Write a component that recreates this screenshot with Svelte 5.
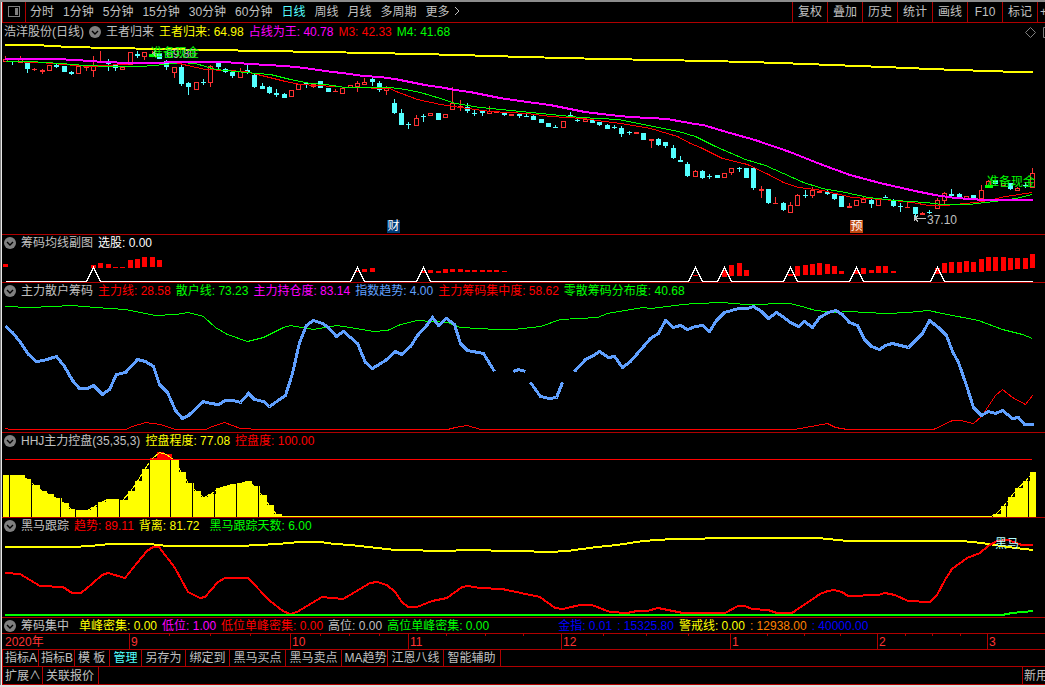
<script lang="ts">
  type Tone = 'plain' | 'white' | 'yellow' | 'magenta' | 'red' | 'green' | 'sky' | 'blue' | 'orange';
  type Legend = { text: string; tone: Tone; lead?: 'sm' | 'lg' };
  type Series = { tone: string; points: string; width?: number };
  // u = up, d = down; then body top, body bottom, high, low
  type Candle = [string, number, number, number?, number?];

  // every chart shares this horizontal space
  const LEFT = 2;
  const WIDTH = 1043;
  const FIRST_BAR = 5;
  const LAST_BAR = 1032;
  const BARS = 141;

  const barX = (i: number) => Math.round(FIRST_BAR + (i * (LAST_BAR - FIRST_BAR)) / (BARS - 1));
  const pct = (x: number) => ((x - LEFT) / WIDTH) * 100;

  const periods = ['分时', '1分钟', '5分钟', '15分钟', '30分钟', '60分钟', '日线', '周线', '月线', '多周期', '更多'];
  let period = $state('日线');

  const tools = ['复权', '叠加', '历史', '统计', '画线', 'F10', '标记'];
  const tabs = ['指标A', '指标B', '模 板', '管理', '另存为', '绑定到', '黑马买点', '黑马卖点', 'MA趋势', '江恩八线', '智能辅助'];
  let tab = $state('管理');

  const mainLegend: Legend[] = [
    { text: '王者归来', tone: 'plain' },
    { text: '王者归来: 64.98', tone: 'yellow' },
    { text: '占线为王: 40.78', tone: 'magenta' },
    { text: 'M3: 42.33', tone: 'red' },
    { text: 'M4: 41.68', tone: 'green' }
  ];
  const averageLegend: Legend[] = [
    { text: '筹码均线副图', tone: 'plain' },
    { text: '选股: 0.00', tone: 'white' }
  ];
  const chipLegend: Legend[] = [
    { text: '主力散户筹码', tone: 'plain' },
    { text: '主力线: 28.58', tone: 'red' },
    { text: '散户线: 73.23', tone: 'green' },
    { text: '主力持仓度: 83.14', tone: 'magenta' },
    { text: '指数趋势: 4.00', tone: 'sky' },
    { text: '主力筹码集中度: 58.62', tone: 'red' },
    { text: '零散筹码分布度: 40.68', tone: 'green' }
  ];
  const controlLegend: Legend[] = [
    { text: 'HHJ主力控盘(35,35,3)', tone: 'plain' },
    { text: '控盘程度: 77.08', tone: 'yellow' },
    { text: '控盘度: 100.00', tone: 'red' }
  ];
  const trackLegend: Legend[] = [
    { text: '黑马跟踪', tone: 'plain' },
    { text: '趋势: 89.11', tone: 'red' },
    { text: '背离: 81.72', tone: 'yellow' },
    { text: '黑马跟踪天数: 6.00', tone: 'green', lead: 'sm' }
  ];
  const focusLegend: Legend[] = [
    { text: '筹码集中', tone: 'plain' },
    { text: '单峰密集: 0.00', tone: 'yellow', lead: 'sm' },
    { text: '低位: 1.00', tone: 'magenta' },
    { text: '低位单峰密集: 0.00', tone: 'red' },
    { text: '高位: 0.00', tone: 'plain' },
    { text: '高位单峰密集: 0.00', tone: 'green' },
    { text: '金指: 0.01', tone: 'blue', lead: 'lg' },
    { text: ': 15325.80', tone: 'blue' },
    { text: '警戒线: 0.00', tone: 'yellow' },
    { text: ': 12938.00', tone: 'orange' },
    { text: ': 40000.00', tone: 'blue' }
  ];

  const candles: Candle[] = [
    ['u', 59, 62, 56], ['d', 61, 62, 61, 65], ['u', 59, 63, 56], ['d', 62, 69, 62, 73], ['u', 69, 70, 68, 71],
    ['u', 70, 72, 69, 74], ['u', 65, 71], ['d', 65, 67, 64, 68], ['d', 66, 72], ['d', 72, 74, 71, 75],
    ['u', 66, 74], ['u', 67, 68, 66, 71], ['u', 66, 71, 56, 77], ['u', 61, 62, 51], ['d', 63, 64, 59, 71],
    ['d', 64, 68, 64, 71], ['u', 67, 70], ['u', 52, 65], ['d', 54, 56, 51, 58], ['u', 52, 57, 52, 60],
    ['u', 54, 56, 51], ['d', 53, 59], ['d', 61, 67, 60, 70], ['u', 67, 73, 67, 78], ['d', 67, 84, 63, 86],
    ['d', 83, 87, 82, 95], ['u', 82, 90], ['d', 82, 83, 79, 85], ['u', 66, 83, 65, 87], ['d', 63, 67, 62, 70],
    ['d', 69, 72, 68, 73], ['d', 72, 76, 71, 78], ['u', 71, 78, 68], ['d', 70, 72, 64, 74], ['d', 75, 87, 74, 88],
    ['d', 86, 89, 83], ['d', 87, 93, 86, 94], ['d', 93, 95, 89, 97], ['d', 94, 98, 93], ['u', 90, 97],
    ['u', 84, 90], ['d', 83, 85, 83, 88], ['u', 84, 87, 83, 88], ['d', 81, 88], ['d', 88, 92],
    ['u', 91, 92, 89], ['u', 88, 94], ['u', 85, 88], ['u', 83, 87, 81, 92], ['u', 82, 85, 78],
    ['d', 79, 82, 78, 86], ['d', 83, 90, 81, 92], ['u', 88, 91, 86, 95], ['d', 103, 113, 99, 114], ['d', 113, 125, 109],
    ['d', 124, 125, 122, 129], ['u', 118, 126, 115], ['d', 116, 117, 114, 122], ['u', 113, 116], ['d', 113, 120],
    ['u', 114, 118], ['u', 103, 110, 87], ['u', 106, 108, 100, 111], ['d', 107, 111, 103, 113], ['d', 113, 114, 109, 116],
    ['d', 111, 113, 111, 116], ['u', 111, 114, 106], ['u', 111, 113], ['d', 112, 115, 112, 116], ['u', 114, 116],
    ['d', 114, 116, 114, 118], ['d', 116, 117, 114], ['d', 116, 120, 115], ['d', 119, 123], ['d', 123, 127],
    ['d', 127, 128, 125], ['u', 121, 128], ['d', 115, 116, 112], ['d', 120, 121, 119, 122], ['u', 119, 122],
    ['d', 120, 123], ['d', 122, 125, 122, 126], ['d', 125, 129, 124], ['d', 127, 128, 125, 129], ['d', 128, 134, 126, 137],
    ['d', 132, 133, 131, 135], ['u', 132, 134], ['d', 133, 140], ['u', 139, 141, 139, 148], ['d', 139, 145, 138, 146],
    ['d', 142, 146, 142, 148], ['d', 148, 158, 145, 159], ['d', 160, 162, 156], ['d', 164, 176, 162, 177], ['u', 171, 177, 170],
    ['d', 171, 178, 170, 179], ['d', 176, 177, 174, 179], ['d', 175, 178], ['u', 173, 178], ['u', 168, 173, 168, 175],
    ['d', 168, 169, 167, 172], ['d', 168, 178], ['d', 168, 188, 168, 190], ['u', 189, 191, 186, 198], ['d', 189, 203, 189, 204],
    ['u', 203, 204, 197], ['d', 203, 210, 202, 211], ['u', 205, 213, 202], ['u', 195, 206, 194], ['d', 195, 196, 190, 198],
    ['u', 190, 196, 187, 198], ['u', 191, 193], ['d', 192, 194, 190, 195], ['d', 194, 199, 193, 200], ['d', 196, 207],
    ['u', 206, 208, 203], ['u', 200, 206], ['u', 199, 203, 197], ['d', 200, 204, 199, 208], ['u', 198, 206],
    ['d', 197, 198, 195], ['d', 200, 206, 199, 207], ['d', 206, 207, 203, 212], ['u', 207, 208, 202], ['d', 207, 214, 207, 219],
    ['u', 213, 215, 212], ['d', 212, 213, 210, 214], ['u', 200, 209, 198], ['u', 193, 201, 192, 204], ['d', 194, 196, 189],
    ['d', 194, 198, 193], ['u', 196, 200], ['d', 195, 198], ['u', 190, 199, 185], ['u', 181, 187, 180],
    ['d', 180, 184], ['u', 183, 186], ['d', 183, 189, 183, 190], ['u', 188, 191, 187], ['d', 185, 186, 182, 188],
    ['u', 173, 188, 168]
  ];

  const mainSeries: Series[] = [
    {
      tone: 'yellow',
      width: 2,
      points:
        '5,45 35,45 70,47 110,48 160,49 210,50 265,51 320,52 372,53 417,54 460,55 490,56 526,57 562,58 606,59 658,60 710,61 746,62 782,63 804,64 834,65 856,66 885,67 907,68 930,69 958,70 988,71 1017,72 1033,72'
    },
    {
      tone: 'red',
      points:
        '5,61 40,62 75,65 90,66 120,64 150,62 175,62 187,65 205,69 245,71 265,76 285,81 300,84 350,87 390,88 393,90 417,99 440,104 460,107 490,111 527,113 550,116 583,118 597,120 620,123 650,128 677,136 690,143 700,147 722,158 747,164 768,174 783,182 798,187 822,190 852,197 882,199 912,202 928,205 945,205 975,202 988,200 1005,196 1032,192'
    },
    {
      tone: 'green',
      points:
        '5,61 30,61 60,63 85,65 110,66 140,66 165,64 180,62 195,63 215,69 245,72 270,74 290,79 310,83 325,84 345,87 390,87 405,89 420,92 440,98 455,103 480,107 510,110 550,114 580,117 618,119 648,125 678,131 695,136 715,146 745,159 765,165 783,173 803,182 822,188 845,192 868,197 895,200 925,202 942,204 968,204 985,202 1002,200 1015,198 1032,194'
    },
    {
      tone: 'magenta',
      width: 2,
      points:
        '5,59 57,59 75,60 90,61 103,62 130,63 200,62 225,62 250,64 285,66 305,68 325,71 350,74 363,76 380,77 395,79 410,82 425,85 445,88 455,90 470,92 485,95 500,98 520,101 550,105 565,108 585,112 610,115 630,117 650,118 667,119 695,124 703,125 730,133 755,140 790,152 820,164 850,175 880,183 915,191 935,195 955,198 985,200 1033,200'
    }
  ];

  const averageBars: [number, number, number][] = [
    [0, 264, 267], [12, 265, 268], [13, 263, 268], [14, 264, 268], [15, 267, 268], [16, 267, 268], [17, 260, 268],
    [18, 259, 268], [19, 257, 267], [20, 257, 267], [21, 260, 267], [48, 271, 272], [49, 269, 272], [50, 268, 272],
    [57, 271, 273], [58, 270, 273], [59, 271, 273], [60, 269, 273], [61, 269, 272], [62, 269, 272], [63, 270, 272],
    [64, 270, 272], [65, 270, 272], [66, 270, 272], [67, 270, 272], [68, 271, 272], [94, 275, 276], [98, 270, 277],
    [99, 265, 276], [100, 263, 276], [101, 270, 276], [107, 274, 276], [108, 266, 276], [109, 265, 275],
    [110, 264, 275], [111, 263, 275], [112, 264, 274], [113, 266, 274], [114, 271, 274], [116, 270, 274],
    [117, 268, 274], [118, 270, 273], [119, 266, 273], [120, 266, 273], [121, 271, 273], [127, 268, 274],
    [128, 263, 273], [129, 262, 273], [130, 262, 273], [131, 261, 272], [132, 262, 272], [133, 259, 272],
    [134, 257, 271], [135, 257, 271], [136, 257, 271], [137, 258, 270], [138, 258, 269], [139, 258, 269],
    [140, 254, 268]
  ];
  const peaks = [12, 48, 57, 94, 98, 107, 116, 127];
  const peakLine = [
    '5,281',
    ...peaks.map((i) => `${barX(i) - 7},281 ${barX(i)},267 ${barX(i) + 7},281`),
    '1032,281'
  ].join(' ');

  const chipSeries: Series[] = [
    {
      tone: 'green',
      points:
        '5,306 30,307 72,305 95,307 125,309 140,312 155,315 175,314 188,312 203,316 215,327 227,334 247,341 263,337 283,327 290,325 313,329 336,325 350,327 373,331 387,330 400,324 417,320 447,322 460,327 497,329 513,329 540,326 560,319 597,317 607,313 643,307 650,308 683,304 695,303 722,302 745,304 790,303 805,307 815,310 835,312 848,311 885,313 908,312 928,310 942,313 978,320 1002,329 1022,334 1032,338'
    },
    {
      tone: 'red',
      points:
        '5,428 10,429 125,429 132,426 145,422 160,424 175,429 205,429 212,426 224,422 240,428 260,429 447,429 455,427 467,425 480,429 794,429 827,423 835,427 847,429 933,429 952,420 960,420 973,423 981,416 995,395 1002,389 1012,397 1025,404 1032,395'
    },
    {
      tone: 'sky',
      width: 3,
      points:
        '5,326 12,332 20,342 28,354 36,361 43,360 56,356 64,366 72,380 79,388 87,388 93,385 102,394 109,389 116,374 125,372 137,359 145,361 153,366 159,384 167,392 175,410 182,418 188,415 203,401 210,403 218,404 225,400 233,400 240,402 248,393 254,399 263,401 269,406 285,395 292,373 299,342 306,325 313,320 322,323 328,327 336,336 343,331 350,337 357,343 365,362 372,368 385,360 395,351 401,354 410,346 417,335 427,324 432,317 438,325 446,318 454,324 460,343 467,350 483,353 494,371'
    },
    { tone: 'sky', width: 3, points: '513,371 518,369 525,371' },
    { tone: 'sky', width: 3, points: '530,382 540,396 549,398 556,397 562,382' },
    {
      tone: 'sky',
      width: 3,
      points:
        '574,371 585,359 593,355 599,351 608,357 614,356 622,367 630,361 650,338 658,333 665,320 673,327 680,325 687,329 695,326 702,325 709,331 716,320 724,312 738,308 747,308 753,306 761,311 768,318 776,312 782,316 790,322 798,326 804,321 812,327 819,317 828,312 835,310 842,314 849,322 857,325 864,339 871,346 879,349 885,345 892,343 900,345 908,347 922,333 929,320 938,327 946,335 952,351 958,362 966,385 973,407 981,415 988,411 995,413 1002,410 1012,418 1018,417 1024,424 1033,424'
    }
  ];

  const BASE = 517;
  const LIMIT = 459;
  const controlLeft = [
    475, 475, 475, 479, 485, 491, 494, 498, 503, 509, 510, 510, 507, 502, 499, 499, 500, 491, 481, 469, 458, 452, 454,
    460, 472, 483, 491, 497, 494, 488, 486, 484, 483, 481, 486, 495, 505, 514
  ];
  const controlRight = [514, 506, 497, 488, 481, 472];
  const controlBars = [
    ...controlLeft.map((top, i) => ({ i, top })),
    ...controlRight.map((top, k) => ({ i: 135 + k, top }))
  ].map(({ i, top }) => ({ x: barX(i) - 2, end: Math.min(barX(i + 1) - 2, 1036), top }));
  const controlLine = [
    ...controlLeft.map((top, i) => `${barX(i)},${top}`),
    '283,516 990,516',
    ...controlRight.map((top, k) => `${barX(135 + k)},${top}`)
  ].join(' ');
  const seams = [9, 31, 60, 75, 97, 119, 149, 170, 192, 214, 236, 258, 1006, 1028];

  const trackSeries: Series[] = [
    {
      tone: 'yellow',
      width: 2,
      points:
        '5,547 72,547 90,546 110,544 150,544 167,546 240,546 258,545 278,544 300,542 320,542 335,544 350,545 395,550 450,551 463,550 517,551 550,552 567,551 597,547 617,545 643,541 673,539 695,539 715,538 745,538 818,538 848,541 962,541 982,543 995,545 1015,548 1033,550'
    },
    {
      tone: 'red',
      width: 2,
      points:
        '5,573 20,574 40,586 63,587 72,593 81,593 92,584 102,575 108,573 125,578 137,563 147,551 153,547 159,547 175,568 188,592 200,598 205,597 218,582 225,578 248,578 270,601 283,611 290,614 297,612 322,597 343,599 350,595 370,583 377,582 387,585 395,592 402,602 408,607 417,607 432,601 447,598 462,587 468,586 480,588 502,589 540,597 555,608 563,609 580,605 592,605 610,612 627,613 637,611 647,611 658,608 683,613 725,613 738,606 745,606 752,609 768,610 777,613 792,613 820,594 828,591 834,590 842,592 848,596 878,595 885,593 895,595 908,601 930,602 937,595 945,580 952,569 967,558 980,553 988,546 997,541 1008,540 1022,545 1033,545'
    },
    { tone: 'green', width: 2, points: '5,615 1002,615 1012,613 1033,611' }
  ];

  const months = [
    { label: '2020年', x: 3 },
    { label: '9', x: 129 },
    { label: '10', x: 290 },
    { label: '11', x: 408 },
    { label: '12', x: 561 },
    { label: '1', x: 730 },
    { label: '2', x: 877 },
    { label: '3', x: 987 }
  ];
  const weeks = [169, 210, 250, 320, 349, 379, 446, 485, 523, 603, 646, 688, 767, 804, 840, 905, 932, 960];
</script>

{#snippet legend(items: Legend[])}
  {#each items as item}
    <span class="item {item.tone} {item.lead ? `lead-${item.lead}` : ''}">{item.text}</span>
  {/each}
{/snippet}

{#snippet toggle(name: string)}
  <button class="toggle" aria-label={name}>
    <svg width="12" height="12" viewBox="0 0 12 12" aria-hidden="true">
      <circle cx="6" cy="6" r="6" fill="#808080" />
      <path d="M3 5l3 3 3-3" fill="none" stroke="#000" stroke-width="1.4" />
    </svg>
  </button>
{/snippet}

{#snippet lines(series: Series[])}
  {#each series as s}
    <polyline
      class="line {s.tone}"
      points={s.points}
      stroke-width={s.width ?? 1}
      transform={s.width === 2 ? undefined : 'translate(0.5 0.5)'}
    />
  {/each}
{/snippet}

<div class="terminal">
  <header class="toolbar">
    <button class="dock" aria-label="侧栏">
      <svg width="13" height="12" viewBox="0 0 13 12" shape-rendering="crispEdges" aria-hidden="true">
        <rect x="0.5" y="0.5" width="11" height="10" rx="1" fill="none" stroke="#808080" />
        <rect x="7" y="2" width="3" height="7" fill="#808080" />
      </svg>
    </button>
    <nav class="periods">
      {#each periods as p}
        <button class:active={period === p} onclick={() => (period = p)}>
          {p}{#if p === '更多'}<svg width="6" height="10" viewBox="0 0 6 10" aria-hidden="true"
              ><path d="M1 1l4 4-4 4" fill="none" stroke="currentColor" /></svg
            >{/if}
        </button>
      {/each}
    </nav>
    <div class="tools">
      {#each tools as tool}
        <button>{tool}</button>
      {/each}
      <button class="add">+</button>
    </div>
  </header>

  <section class="panel">
    <div class="legend tall">
      <span class="item plain">浩洋股份(日线)</span>
      {@render toggle('王者归来')}
      {@render legend(mainLegend)}
      <span class="corner">
        <svg width="20" height="11" viewBox="0 0 20 11" aria-hidden="true">
          <path d="M5.5 .5l5 5-5 5-5-5z M20 .5h-1.5v10h1.5" fill="none" stroke="#808080" />
        </svg>
      </span>
    </div>
    <div class="plot">
      <svg class="chart main" viewBox="2 41 1043 193" preserveAspectRatio="none" shape-rendering="crispEdges">
        {#each candles as [kind, top, bottom, high = top, low = bottom], i}
          {@const x = barX(i)}
          <rect class="candle-{kind}" {x} y={high} width="1" height={Math.max(low - high, 1)} />
          <rect class="candle-{kind}" x={x - 2} y={top} width="5" height={Math.max(bottom - top, 1)} />
          {#if kind === 'u' && bottom - top > 2}
            <rect x={x - 1} y={top + 1} width="3" height={bottom - top - 2} />
          {/if}
        {/each}
        {@render lines(mainSeries)}
        <rect class="buy" x="149" y="54" width="8" height="3" />
        <rect class="buy" x="985" y="185" width="8" height="3" />
        <path class="arrow" d="M926 218.5h-11 M918 215.5l-3 3 3 3 M914.5 215v6" />
        <path class="arrow" d="M162 53.5h-9 M156 50.5l-3 3 3 3" />
      </svg>
      <span class="mark plain" style:left="{pct(166)}%" style:top="5px">69.80</span>
      <span class="mark green" style:left="{pct(151)}%" style:top="4px">准备现金</span>
      <span class="mark green" style:left="{pct(987)}%" style:top="133px">准备现金</span>
      <span class="mark plain" style:left="{pct(927)}%" style:top="171px">37.10</span>
      <span class="mark badge report" style:left="{pct(387)}%" style:top="179px">财</span>
      <span class="mark badge forecast" style:left="{pct(850)}%" style:top="179px">预</span>
    </div>
  </section>

  <section class="panel">
    <div class="legend">{@render toggle('筹码均线副图')}{@render legend(averageLegend)}</div>
    <svg class="chart average" viewBox="2 251 1043 31" preserveAspectRatio="none" shape-rendering="crispEdges">
      {#each averageBars as [i, top, bottom]}
        <rect class="bar-red" x={barX(i) - 2} y={top} width="5" height={bottom - top} />
      {/each}
      <polyline class="line white" points={peakLine} transform="translate(0.5 0.5)" />
    </svg>
  </section>

  <section class="panel">
    <div class="legend">{@render toggle('主力散户筹码')}{@render legend(chipLegend)}</div>
    <svg class="chart chips" viewBox="2 299 1043 133" preserveAspectRatio="none" shape-rendering="crispEdges">
      {@render lines(chipSeries)}
    </svg>
  </section>

  <section class="panel">
    <div class="legend">{@render toggle('主力控盘')}{@render legend(controlLegend)}</div>
    <svg class="chart control" viewBox="2 449 1043 68" preserveAspectRatio="none" shape-rendering="crispEdges">
      {#each controlBars as bar}
        <rect class="bar-yellow" x={bar.x} y={bar.top} width={bar.end - bar.x} height={BASE - bar.top} />
        {#if bar.top < LIMIT}
          <rect class="bar-red" x={bar.x} y={bar.top} width={bar.end - bar.x} height={LIMIT - bar.top} />
        {/if}
      {/each}
      <polyline class="line yellow" points={controlLine} transform="translate(0.5 0.5)" />
      {#each seams as x}
        <rect {x} y={LIMIT + 1} width="1" height={BASE - LIMIT - 1} />
      {/each}
      <rect class="bar-red" x="5" y={LIMIT} width="1027" height="1" />
    </svg>
  </section>

  <section class="panel">
    <div class="legend">{@render toggle('黑马跟踪')}{@render legend(trackLegend)}</div>
    <div class="plot">
      <svg class="chart track" viewBox="2 534 1043 83" preserveAspectRatio="none" shape-rendering="crispEdges">
        {@render lines(trackSeries)}
      </svg>
      <span class="mark ice" style:left="{pct(995)}%" style:top="2px">黑马</span>
    </div>
  </section>

  <section class="panel">
    <div class="legend short">{@render toggle('筹码集中')}{@render legend(focusLegend)}</div>
  </section>

  <div class="panel plot axis">
    <svg class="chart dates" viewBox="2 634 1043 15" preserveAspectRatio="none" shape-rendering="crispEdges">
      {#each months.slice(1) as m}
        <rect class="tick" x={m.x} y="634" width="1" height="15" />
      {/each}
      {#each weeks as x}
        <rect class="tick" {x} y="634" width="1" height="2" />
      {/each}
    </svg>
    {#each months as m}
      <span class="mark" style:left="{pct(m.x + 2)}%">{m.label}</span>
    {/each}
  </div>

  <nav class="tabs">
    {#each tabs as t}
      <button class:tight={/[A-Z]/.test(t)} class:active={tab === t} onclick={() => (tab = t)}>{t}</button>
    {/each}
  </nav>

  <footer class="tabs status">
    <button class="tight">扩展∧</button>
    <button>关联报价</button>
    <button class="user">新用户</button>
  </footer>
</div>

<style>
  :global(body) {
    margin: 0;
    background: #000;
  }
  .terminal {
    overflow: hidden;
    border-top: 2px solid #8c8c8c;
    border-bottom: 2px solid #e0e0e0;
    background: linear-gradient(90deg, #808080 50%, #e8e8e8 50%) 0 0 / 2px 100% no-repeat #000;
    padding-left: 2px;
    color: #c0c0c0;
    font: 12px/16px 'Liberation Sans', 'Noto Sans CJK SC', sans-serif;
    white-space: nowrap;
  }
  button {
    margin: 0;
    padding: 0;
    border: 0;
    background: none;
    color: inherit;
    font: inherit;
    cursor: pointer;
  }
  .toolbar {
    display: flex;
    height: 20px;
    border-bottom: 1px solid #b00000;
  }
  .dock {
    display: grid;
    place-items: center;
    width: 24px;
    flex: none;
    border-right: 1px solid #b00000;
    border-left: 1px solid #b00000;
  }
  .periods {
    display: flex;
    flex: 1;
    gap: 9px;
    min-width: 0;
    padding-left: 4px;
  }
  .periods svg {
    margin-left: 4px;
  }
  .active {
    color: #54ffff;
  }
  .tools {
    display: flex;
    flex: none;
  }
  .tools button {
    width: 35px;
    border-left: 1px solid #b00000;
  }
  .tools .add {
    width: 8px;
    overflow: hidden;
    padding-left: 2px;
    text-align: left;
  }
  .panel {
    border-bottom: 1px solid #b00000;
  }
  .legend {
    display: flex;
    align-items: center;
    gap: 5px;
    height: 16px;
    overflow: hidden;
    padding-left: 2px;
  }
  .legend.tall {
    height: 18px;
  }
  .legend.short {
    height: 15px;
  }
  .toggle {
    display: flex;
    flex: none;
  }
  .corner {
    display: flex;
    margin-left: auto;
  }
  .lead-sm {
    margin-left: 5px;
  }
  .lead-lg {
    margin-left: 64px;
  }
  .plot {
    position: relative;
  }
  .chart {
    display: block;
    width: 100%;
  }
  .main {
    height: 193px;
  }
  .average {
    height: 31px;
  }
  .chips {
    height: 133px;
  }
  .control {
    height: 68px;
  }
  .track {
    height: 83px;
  }
  .dates {
    height: 15px;
  }
  .line {
    fill: none;
    stroke: currentColor;
  }
  .arrow {
    fill: none;
    stroke: #c0c0c0;
  }
  .candle-u {
    fill: #ff3232;
  }
  .candle-d {
    fill: #54ffff;
  }
  .buy {
    fill: #00ff00;
  }
  .bar-red {
    fill: #ff0000;
  }
  .bar-yellow {
    fill: #ffff00;
  }
  .tick {
    fill: #b00000;
  }
  .plain {
    color: #c0c0c0;
  }
  .white {
    color: #fff;
  }
  .yellow {
    color: #ffff00;
  }
  .magenta {
    color: #ff00ff;
  }
  .red {
    color: #ff0000;
  }
  .green {
    color: #00ff00;
  }
  .sky {
    color: #60a0ff;
  }
  .blue {
    color: #0000ff;
  }
  .orange {
    color: #ff8000;
  }
  .ice {
    color: #b4ffff;
  }
  .mark {
    position: absolute;
  }
  .badge {
    width: 13px;
    color: #fff;
    line-height: 13px;
    text-align: center;
  }
  .report {
    background: #003c78;
  }
  .forecast {
    background: #c04810;
  }
  .axis .mark {
    top: 0;
    color: #ff3232;
  }
  .tabs {
    display: flex;
    height: 16px;
    border-bottom: 1px solid #b00000;
    border-left: 1px solid #b00000;
  }
  .tabs button {
    padding: 0 4px 0 3px;
    border-right: 1px solid #b00000;
  }
  .tabs .tight {
    padding: 0 1px 0 2px;
  }
  .status {
    height: 17px;
  }
  .status .user {
    width: 23px;
    margin-left: auto;
    overflow: hidden;
    padding: 0 0 0 1px;
    border-right: 0;
    border-left: 1px solid #b00000;
    text-align: left;
  }
</style>
